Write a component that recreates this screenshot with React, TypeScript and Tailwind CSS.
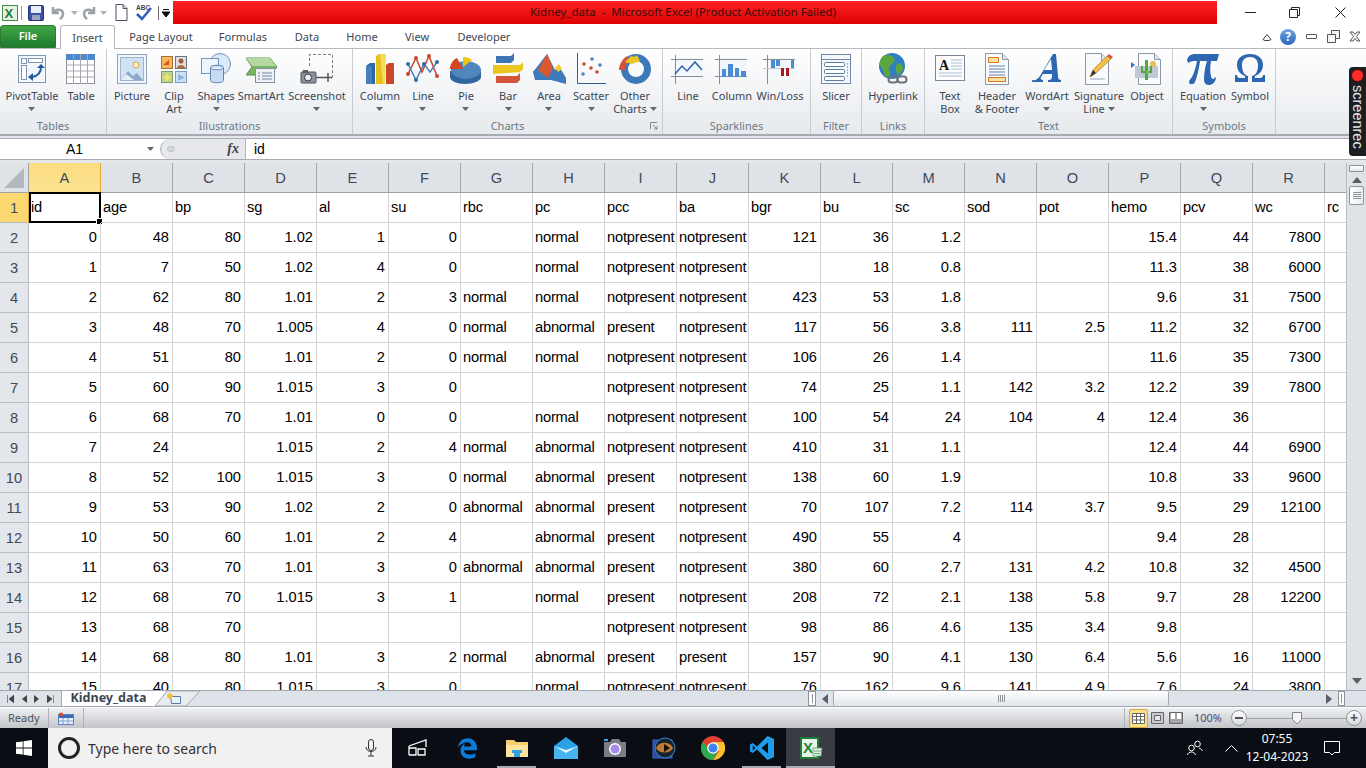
import type { ReactNode } from 'react'
import { FaEdgeLegacy } from 'react-icons/fa6'

// ─── Data ─────────────────────────────────────────────────────────────────────

const COLS = 'A B C D E F G H I J K L M N O P Q R'.split(' ')

const ROWS: string[][] = [
  ['id', 'age', 'bp', 'sg', 'al', 'su', 'rbc', 'pc', 'pcc', 'ba', 'bgr', 'bu', 'sc', 'sod', 'pot', 'hemo', 'pcv', 'wc', 'rc'],
  ['0', '48', '80', '1.02', '1', '0', '', 'normal', 'notpresent', 'notpresent', '121', '36', '1.2', '', '', '15.4', '44', '7800', ''],
  ['1', '7', '50', '1.02', '4', '0', '', 'normal', 'notpresent', 'notpresent', '', '18', '0.8', '', '', '11.3', '38', '6000', ''],
  ['2', '62', '80', '1.01', '2', '3', 'normal', 'normal', 'notpresent', 'notpresent', '423', '53', '1.8', '', '', '9.6', '31', '7500', ''],
  ['3', '48', '70', '1.005', '4', '0', 'normal', 'abnormal', 'present', 'notpresent', '117', '56', '3.8', '111', '2.5', '11.2', '32', '6700', ''],
  ['4', '51', '80', '1.01', '2', '0', 'normal', 'normal', 'notpresent', 'notpresent', '106', '26', '1.4', '', '', '11.6', '35', '7300', ''],
  ['5', '60', '90', '1.015', '3', '0', '', '', 'notpresent', 'notpresent', '74', '25', '1.1', '142', '3.2', '12.2', '39', '7800', ''],
  ['6', '68', '70', '1.01', '0', '0', '', 'normal', 'notpresent', 'notpresent', '100', '54', '24', '104', '4', '12.4', '36', '', ''],
  ['7', '24', '', '1.015', '2', '4', 'normal', 'abnormal', 'notpresent', 'notpresent', '410', '31', '1.1', '', '', '12.4', '44', '6900', ''],
  ['8', '52', '100', '1.015', '3', '0', 'normal', 'abnormal', 'present', 'notpresent', '138', '60', '1.9', '', '', '10.8', '33', '9600', ''],
  ['9', '53', '90', '1.02', '2', '0', 'abnormal', 'abnormal', 'present', 'notpresent', '70', '107', '7.2', '114', '3.7', '9.5', '29', '12100', ''],
  ['10', '50', '60', '1.01', '2', '4', '', 'abnormal', 'present', 'notpresent', '490', '55', '4', '', '', '9.4', '28', '', ''],
  ['11', '63', '70', '1.01', '3', '0', 'abnormal', 'abnormal', 'present', 'notpresent', '380', '60', '2.7', '131', '4.2', '10.8', '32', '4500', ''],
  ['12', '68', '70', '1.015', '3', '1', '', 'normal', 'present', 'notpresent', '208', '72', '2.1', '138', '5.8', '9.7', '28', '12200', ''],
  ['13', '68', '70', '', '', '', '', '', 'notpresent', 'notpresent', '98', '86', '4.6', '135', '3.4', '9.8', '', '', ''],
  ['14', '68', '80', '1.01', '3', '2', 'normal', 'abnormal', 'present', 'present', '157', '90', '4.1', '130', '6.4', '5.6', '16', '11000', ''],
  ['15', '40', '80', '1.015', '3', '0', '', 'normal', 'notpresent', 'notpresent', '76', '162', '9.6', '141', '4.9', '7.6', '24', '3800', ''],
]

// ─── Ribbon icons (36x34 box) ─────────────────────────────────────────────────

const ICONS: Record<string, ReactNode> = {
  pivot: (
    <>
      <rect x="4.5" y="3.5" width="27" height="27" fill="#f4f7fb" stroke="#7f95b2" />
      <rect x="7.5" y="6.5" width="5" height="5" fill="#fff" stroke="#7f95b2" />
      <rect x="14.5" y="6.5" width="14" height="4" fill="#fff" stroke="#7f95b2" />
      <rect x="7.5" y="13.5" width="5" height="14" fill="#fff" stroke="#7f95b2" />
      <path d="M27 15c0 6-3 9-9 10" fill="none" stroke="#1f5c9e" strokeWidth="2" />
      <path d="M23 16l4-4 4 4zM19 21v8l-5-4z" fill="#1f5c9e" />
    </>
  ),
  table: (
    <>
      <rect x="3.5" y="2.5" width="28" height="29" fill="#fff" stroke="#8d9299" />
      <rect x="3.5" y="2.5" width="28" height="5" fill="#4f87cf" stroke="#4f87cf" />
      <path d="M3 13h29M3 19h29M3 25h29M10.500 2v30M17.500 2v30M24.500 2v30" stroke="#a4a8ae" />
    </>
  ),
  picture: (
    <>
      <rect x="3.500" y="2.500" width="29" height="29" fill="#f2f6fb" stroke="#8fa6c2" />
      <rect x="6.500" y="5.500" width="23" height="23" fill="#cfe2f6" stroke="#9fb5cf" />
      <circle cx="22" cy="13" r="3" fill="#fff2c4" stroke="#ed9c4a" />
      <path d="M7 28l7-9 5 5 4-3 6 7z" fill="#8fa9cd" />
      <path d="M7 28l5-6 4 3 4 3z" fill="#e6eef8" />
    </>
  ),
  clip: (
    <>
      <rect x="5.500" y="4.500" width="11" height="12" fill="#f6b65a" stroke="#a56f36" />
      <path d="M7 13l6-5v5z" fill="#d9541e" />
      <rect x="19.500" y="4.500" width="11" height="12" fill="#dde1e6" stroke="#6c7480" />
      <circle cx="25" cy="9" r="2.500" fill="#a85c34" />
      <path d="M21 16c0-4 8-4 8 0z" fill="#b76a3a" />
      <rect x="5.500" y="19.500" width="11" height="11" fill="#bcd48c" stroke="#7f9f6a" />
      <path d="M11 21l1.500 3 3 1.500-3 1.500-1.500 3-1.500-3-3-1.500 3-1.500z" fill="#f5e36a" />
      <rect x="19.500" y="19.500" width="11" height="11" fill="#cfe0f3" stroke="#7e9cc0" />
      <path d="M22 22l7 3.500-7 3.500z" fill="#8fb3de" />
    </>
  ),
  shapes: (
    <>
      <circle cx="22" cy="12" r="10.500" fill="#dce9f7" stroke="#6e93bd" />
      <rect x="3.500" y="6.500" width="17" height="15" fill="#edf4fb" stroke="#6e93bd" />
      <path d="M12.500 15.500c0-3 13-3 13 0v13c0 3-13 3-13 0z" fill="#c7dcf2" stroke="#5e86b2" />
      <path d="M12.500 15.500c0 3 13 3 13 0" fill="#f2f7fc" stroke="#5e86b2" />
    </>
  ),
  smartart: (
    <>
      <path d="M3 6h24l7 9-7 8H3l6-8z" fill="#7bb661" stroke="#5d8c48" />
      <path d="M3 6h24l6 8H9z" fill="#b5d8a0" />
      <rect x="12.500" y="16.500" width="19" height="14" fill="#eef1f5" stroke="#8592a2" />
      <path d="M15 21h2M19 21h10M15 24h2M19 24h10M15 27h2M19 27h10" stroke="#6f86a6" />
    </>
  ),
  screenshot: (
    <>
      <path d="M10.500 14V2.500h23v23h-2" fill="none" stroke="#7d7d7d" strokeDasharray="3 2" />
      <rect x="2" y="20" width="15" height="11" rx="1" fill="#8b9198" stroke="#52575d" />
      <rect x="4" y="18" width="5" height="3" fill="#565b62" />
      <circle cx="9" cy="25.500" r="3.500" fill="#e6edf4" stroke="#33383e" />
      <path d="M17 25.500h12M29 21v9M25 25.500h8" stroke="#555" strokeWidth="1.500" />
    </>
  ),
  column: (
    <>
      <path d="M4 14l4-3h5v21H4z" fill="#2f66a8" />
      <path d="M14 4l3-2h6v30h-9z" fill="#e8c01e" />
      <path d="M18 2h6l-1 30h-2z" fill="#f5dc5d" />
      <path d="M24 13l3-2h5v21h-8z" fill="#c9482c" />
      <path d="M4 14h6v18H4z" fill="#467fbe" />
    </>
  ),
  line: (
    <>
      <path d="M3 22L11 6l6 14 7-16 8 20" fill="none" stroke="#c9472e" strokeWidth="1.500" />
      <path d="M3 12l8 16 8-16 6 8 7-10" fill="none" stroke="#4d7fb3" strokeWidth="1.500" />
      <g fill="#2f6ba8">
        <circle cx="3" cy="12" r="2" /><circle cx="11" cy="28" r="2" /><circle cx="19" cy="12" r="2" /><circle cx="32" cy="10" r="2" />
      </g>
      <g fill="#c9472e">
        <circle cx="3" cy="22" r="2" /><circle cx="11" cy="6" r="2" /><circle cx="24" cy="4" r="2" /><circle cx="32" cy="24" r="2" />
      </g>
    </>
  ),
  pie: (
    <>
      <path d="M2 19v6c0 4 7 7 15 7s16-3 16-7v-6z" fill="#2f66a0" />
      <ellipse cx="18" cy="18" rx="15" ry="9" fill="#4f87bd" />
      <path d="M15 17L9 6C5 8 2 12 2 17z" fill="#d9431f" />
      <path d="M15 15V5c4 0 7 1 9 3z" fill="#f1c40f" />
    </>
  ),
  bar: (
    <>
      <path d="M6 4h15l3-3v7l-3 3H6z" fill="#3d76b7" />
      <path d="M6 13h24l3-3v7l-3 3-27 2v-9z" fill="#ecc51f" />
      <path d="M6 24h21l3-3v7l-3 3H6z" fill="#d4563a" />
    </>
  ),
  area: (
    <>
      <path d="M2 20L8 14l6 14z" fill="#3f7bbb" />
      <path d="M2 20L16 2l8 16 4-4 7 12v6L20 28 4 28z" fill="#3f7bbb" />
      <path d="M7 18L16 2l6 14-5 10z" fill="#d9572e" />
      <path d="M24 16l4-4 3 5-4 3z" fill="#f2cc2c" />
    </>
  ),
  scatter: (
    <>
      <path d="M4.500 1v30.500H33" fill="none" stroke="#2c5d94" />
      <g fill="#d24a2d">
        <circle cx="11" cy="12" r="1.800" /><circle cx="18" cy="16" r="1.800" /><circle cx="24" cy="20" r="1.800" />
      </g>
      <g fill="#4d84bd">
        <circle cx="19" cy="7" r="1.800" /><circle cx="27" cy="13" r="1.800" /><circle cx="10" cy="22" r="1.800" />
      </g>
    </>
  ),
  other: (
    <>
      <circle cx="19" cy="17" r="11.500" fill="none" stroke="#3d78b8" strokeWidth="7" />
      <path d="M8 15c0-4 2-7 5-9l-3-5c-5 3-8 9-8 14z" fill="#d4563a" transform="translate(0 3)" />
      <path d="M9 9l6-6c1 1 5 1 6-1l3 6-8 3z" fill="#ecc51f" transform="translate(-1 1)" />
    </>
  ),
  sline: (
    <>
      <rect x="4" y="6" width="29" height="20" fill="#f3f6fa" />
      <path d="M1 7.500h32M1 24.500h32M5.500 3v29" stroke="#8a8f96" />
      <path d="M5 22l7-8 5 5 8-9 7 8" fill="none" stroke="#2c64b0" strokeWidth="1.500" />
    </>
  ),
  scolumn: (
    <>
      <rect x="4" y="6" width="29" height="20" fill="#f3f6fa" />
      <path d="M1 7.500h32M1 24.500h32M5.500 3v29" stroke="#8a8f96" />
      <path d="M8 17h4v8H8zM14 12h5v13h-5zM21 16h4v9h-4zM27 19h5v6h-5z" fill="#4a8cd4" />
    </>
  ),
  swin: (
    <>
      <rect x="4" y="6" width="29" height="20" fill="#f3f6fa" />
      <path d="M1 7.500h32M5.500 3v29" stroke="#8a8f96" />
      <path d="M1 16.500h32" stroke="#c6cad0" />
      <path d="M9 8h4v8H9zM14 8h4v6h-4zM29 8h3v8h-3z" fill="#4a8cd4" />
      <path d="M19 16h3v8h-3zM24 16h3v8h-3z" fill="#a31c1c" />
    </>
  ),
  slicer: (
    <>
      <rect x="3.500" y="2.500" width="29" height="29" fill="#f4f7fb" stroke="#6f8aa8" />
      <path d="M3 7.500h30" stroke="#6f8aa8" />
      <rect x="6.500" y="10.500" width="20" height="4" rx="1" fill="#fff" stroke="#5c7da3" />
      <rect x="6.500" y="17.500" width="20" height="4" rx="1" fill="#fff" stroke="#5c7da3" />
      <rect x="6.500" y="24.500" width="20" height="4" rx="1" fill="#fff" stroke="#5c7da3" />
      <path d="M29.500 11v15" stroke="#9cb0c5" strokeDasharray="2 1" />
    </>
  ),
  hyperlink: (
    <>
      <circle cx="17" cy="14" r="13" fill="#2f7fc4" />
      <path d="M8 4c4-2 9-1 11 2 2 2-1 6-3 7-3 1-2 5-1 8 1 2-2 5-5 3-2-3-1-6-4-9-2-3-1-8 2-11zM22 12c3-2 5 0 6 3 0 4-2 7-5 8-2-3-3-8-1-11z" fill="#5da63c" />
      <rect x="13.500" y="24.500" width="9" height="6" rx="3" fill="none" stroke="#6b737c" strokeWidth="2" />
      <rect x="22.500" y="24.500" width="9" height="6" rx="3" fill="none" stroke="#6b737c" strokeWidth="2" />
    </>
  ),
  textbox: (
    <>
      <rect x="3.500" y="3.500" width="29" height="25" fill="#fdfdfe" stroke="#7b8794" />
      <text x="7" y="18" fontFamily="Liberation Serif, serif" fontWeight="700" fontSize="14" fill="#111">A</text>
      <path d="M19 8h11M19 11h11M19 14h11M19 17h11M7 21h23M7 24h23" stroke="#a9bcd4" />
    </>
  ),
  header: (
    <>
      <path d="M6.500 1.500h17l6 6v25h-23z" fill="#f8fafc" stroke="#8a97a6" />
      <path d="M23.500 1.500v6h6" fill="#dde4ec" stroke="#8a97a6" />
      <rect x="9.500" y="5.500" width="10" height="5" fill="#fbe3a8" stroke="#d97a1e" />
      <path d="M10 14h16M10 17h16M10 20h16M10 23h16" stroke="#5f7fb0" />
      <rect x="9.500" y="25.500" width="17" height="4" fill="#fbe3a8" stroke="#d97a1e" />
    </>
  ),
  wordart: (
    <path d="M3 28c3 1 6-1 8-4L24 2h3l2 22c0 3 1 4 3 4v2H19v-2c3 0 4-1 4-4v-2h-9l-2 3c-1 2 0 3 2 3v2H3zM15 18h8l-1-11z" fill="#2e67b1" fillRule="evenodd" />
  ),
  signature: (
    <>
      <path d="M4.500 1.500h16l7 7v24h-23z" fill="#f9fafc" stroke="#8a97a6" />
      <path d="M20.500 1.500v7h7" fill="#dde4ec" stroke="#8a97a6" />
      <path d="M9 27h15" stroke="#9aa7b5" />
      <path d="M9 25l3-7L26 4l4 3-15 14z" fill="#f1c14a" stroke="#a97920" strokeWidth=".7" />
      <path d="M26 4l2-2 4 3-2 2z" fill="#d7553f" />
      <path d="M9 25l3-7 3 3z" fill="#333" />
    </>
  ),
  object: (
    <>
      <path d="M9.500 1.500h16l6 6v25h-22z" fill="#f8fafc" stroke="#8a97a6" />
      <path d="M25.500 1.500v6h6" fill="#dde4ec" stroke="#8a97a6" />
      <rect x="6" y="14" width="23" height="12" fill="#bfc9d4" />
      <circle cx="24" cy="12" r="3" fill="#e4bd5d" />
      <path d="M16 8h3v20h-3zM12 14h2v5h4v2h-6zM23 14h-2v5h-4v2h6z" fill="#52a742" />
      <path d="M2 10l4 3-4 3z" fill="#2a74c4" />
    </>
  ),
  equation: (
    <path d="M2 8c1-4 4-6 8-6h24l-2 7h-6c-1 6-1 11 0 15 0 2 1 3 3 3l1-2 1 1c-1 5-4 7-7 7-4 0-5-3-5-6 0-5 1-12 3-18h-7c-1 8-3 16-5 21-1 3-6 3-6 0 0-2 2-3 3-5 2-4 4-10 5-16H9c-3 0-4 1-6 2z" fill="#2e67b1" />
  ),
  symbol: (
    <path d="M3 30v-7h2c0 2 1 3 3 3h5v-2c-5-2-8-6-8-11C5 6 10 2 18 2s13 4 13 11c0 5-3 9-8 11v2h5c2 0 3-1 3-3h2v7H20v-6c4-1 6-5 6-11 0-5-3-8-8-8s-8 3-8 8c0 6 2 10 6 11v6z" fill="#2e67b1" />
  ),
}

// ─── Sub-components ───────────────────────────────────────────────────────────

function Caret({ className = '' }: { className?: string }) {
  return (
    <svg width="7" height="4" viewBox="0 0 7 4" className={`inline-block ${className}`}>
      <path d="M0 0h7L3.500 4z" fill="#5f6770" />
    </svg>
  )
}

function RibbonButton({
  icon,
  width,
  label,
  arrow,
}: {
  icon: string
  width: number
  label: string[]
  arrow?: boolean
}) {
  return (
    <div className="flex flex-col items-center shrink-0" style={{ width }}>
      <svg width="36" height="34" viewBox="0 0 36 34">
        {ICONS[icon]}
      </svg>
      <div className="mt-[3px] text-center whitespace-nowrap leading-[13px] text-[11px] text-[#3c4653]">
        <div>{label[0]}</div>
        {label[1] && (
          <div>
            {label[1]}
            {arrow && <Caret className="ml-[3px] mb-[2px]" />}
          </div>
        )}
        {!label[1] && arrow && (
          <div className="flex h-[13px] items-center justify-center">
            <Caret />
          </div>
        )}
      </div>
    </div>
  )
}

function RibbonGroup({
  title,
  width,
  pad,
  launcher,
  children,
}: {
  title: string
  width: number
  pad: number
  launcher?: boolean
  children: ReactNode
}) {
  return (
    <div
      className="flex flex-col shrink-0 h-full border-r border-[#c8ccd2] relative"
      style={{ width, paddingLeft: pad }}
    >
      <div className="flex flex-1 pt-[3px]">{children}</div>
      <div className="h-[16px] text-center leading-[16px] text-[11px] text-[#6d7885]" style={{ marginLeft: -pad }}>
        {title}
      </div>
      {launcher && (
        <svg width="8" height="8" viewBox="0 0 8 8" className="absolute right-[4px] bottom-[4px]">
          <path d="M.5 7V.5H7M3 3l4 4M4 7h3V4" fill="none" stroke="#7d8794" />
        </svg>
      )}
    </div>
  )
}

function Arrow({ dir, className = '' }: { dir: 'l' | 'r' | 'u' | 'd'; className?: string }) {
  const d = { l: 'M6 0v10L0 5z', r: 'M0 0v10l6-5z', u: 'M0 6h10L5 0z', d: 'M0 0h10L5 6z' }[dir]
  const w = dir === 'l' || dir === 'r' ? 6 : 10
  const h = dir === 'l' || dir === 'r' ? 10 : 6
  return (
    <svg width={w} height={h} viewBox={`0 0 ${w} ${h}`} className={className}>
      <path d={d} fill="#5b5f66" />
    </svg>
  )
}

function TitleBar() {
  return (
    <div className="flex h-[25px] shrink-0 items-center bg-white">
      <div className="flex w-[173px] shrink-0 items-center">
        <svg width="18" height="18" viewBox="0 0 18 18" className="ml-[1px]">
          <rect x="1.500" y="1.500" width="15" height="15" fill="#e8f2e4" stroke="#3f8f48" />
          <text x="3.500" y="14" fontSize="13" fontWeight="700" fontFamily="Liberation Sans, sans-serif" fill="#1d7a35">X</text>
        </svg>
        <div className="ml-[2px] mr-[6px] h-[14px] w-px bg-[#9b9b9b]" />
        <svg width="16" height="16" viewBox="0 0 16 16">
          <rect x=".5" y=".5" width="15" height="15" rx="1" fill="#3c52a8" stroke="#27346f" />
          <rect x="3" y="1" width="10" height="7" fill="#e9eefa" />
          <rect x="4" y="10" width="8" height="5" fill="#9aa4c0" />
        </svg>
        <svg width="20" height="16" viewBox="0 0 20 16" className="ml-[5px]">
          <path d="M4 2v6h6M4 8c3-5 10-4 10 1 0 3-2 4-3 5" fill="none" stroke="#9aa0a8" strokeWidth="2.500" />
        </svg>
        <Caret className="ml-[2px] opacity-50" />
        <svg width="20" height="16" viewBox="0 0 20 16">
          <path d="M16 2v6h-6M16 8c-3-5-10-4-10 1 0 3 2 4 3 5" fill="none" stroke="#9aa0a8" strokeWidth="2.500" />
        </svg>
        <Caret className="ml-[2px] opacity-50" />
        <svg width="13" height="17" viewBox="0 0 13 17" className="ml-[8px]">
          <path d="M1 .5h7l4 4v12H1z" fill="#fff" stroke="#48535f" />
          <path d="M8 .5v4h4" fill="#c9d4df" stroke="#48535f" />
        </svg>
        <svg width="18" height="17" viewBox="0 0 18 17" className="ml-[7px]">
          <text x="1" y="6" fontSize="6.500" fontWeight="700" fontFamily="Liberation Sans, sans-serif" fill="#444">ABC</text>
          <path d="M2 10l5 5 9-11" fill="none" stroke="#2c5fb3" strokeWidth="2.500" />
        </svg>
        <div className="ml-[5px] mr-[3px] h-[14px] w-px bg-[#6e6e6e]" />
        <svg width="8" height="8" viewBox="0 0 8 8">
          <path d="M1 .5h6M0 3h8L4 8z" stroke="#111" fill="#111" />
        </svg>
      </div>
      <div className="flex h-[23px] w-[1044px] shrink-0 items-center justify-center bg-gradient-to-b from-[#ff2020] to-[#dc0000] pb-[1px] pr-[24px] text-[11.5px] text-[#3a0c0c]">
        Kidney_data&nbsp;&nbsp;-&nbsp;&nbsp;Microsoft Excel (Product Activation Failed)
      </div>
      <div className="flex flex-1 items-center pl-[28px] gap-[33px]">
        <svg width="11" height="11" viewBox="0 0 11 11"><path d="M0 5.500h11" stroke="#222" /></svg>
        <svg width="11" height="11" viewBox="0 0 11 11"><path d="M.5 2.500h8v8h-8zM2.500 2.500V.5h8v8h-2" fill="none" stroke="#222" /></svg>
        <svg width="11" height="11" viewBox="0 0 11 11" className="ml-[2px]"><path d="M.5.500l10 10M10.500.5l-10 10" stroke="#222" /></svg>
      </div>
    </div>
  )
}

function TabBar() {
  const tabs = [
    ['Page Layout', 92],
    ['Formulas', 72],
    ['Data', 56],
    ['Home', 54],
    ['View', 56],
    ['Developer', 78],
  ] as const
  return (
    <div className="flex h-[24px] shrink-0 items-end border-b border-[#b6babf] bg-white text-[11px]">
      <div className="flex h-[23px] w-[56px] items-center justify-center rounded-t-[3px] border border-[#2c7a32] bg-gradient-to-b from-[#41a647] to-[#1c7b2e] font-semibold text-white">
        File
      </div>
      <div className="ml-[4px] flex h-[24px] w-[55px] translate-y-[1px] items-center justify-center rounded-t-[3px] border border-b-0 border-[#b6babf] bg-white pt-[1px] text-[#3c4653]">
        Insert
      </div>
      {tabs.map(([name, w]) => (
        <div key={name} className="flex h-[23px] items-center justify-center pt-[1px] text-[#3c4653]" style={{ width: w }}>
          {name}
        </div>
      ))}
      <div className="flex h-[23px] flex-1 items-center justify-end gap-[7px] pr-[5px]">
        <svg width="10" height="8" viewBox="0 0 10 8"><path d="M1 6.500L5 1.500l4 5-2 1H3z" fill="#fff" stroke="#444" /></svg>
        <div className="ml-[1px] flex h-[16px] w-[16px] items-center justify-center rounded-full bg-gradient-to-b from-[#6ea5e6] to-[#2b66b8] text-[12px] font-bold leading-none text-white">
          ?
        </div>
        <div className="ml-[3px] h-[5px] w-[11px] rounded-[1px] border border-[#555]" />
        <svg width="13" height="13" viewBox="0 0 13 13" className="ml-[3px]"><path d="M.5 4.500h8v8h-8zM4.500 4.500v-4h8v8h-4" fill="#f3f3f3" stroke="#555" /><path d="M3 8h4v3H3z" fill="#fff" /></svg>
        <svg width="12" height="11" viewBox="0 0 12 11" className="ml-[2px]"><path d="M1 1h3l2 2.500L8 1h3L7.500 5.500 11 10H8L6 7.500 4 10H1l3.500-4.500z" fill="#fff" stroke="#555" /></svg>
      </div>
    </div>
  )
}

function Ribbon() {
  return (
    <div className="relative flex h-[87px] shrink-0 border-b-2 border-[#a7aaae] bg-gradient-to-b from-white to-[#e6e9ed]">
      <RibbonGroup title="Tables" width={107} pad={3}>
        <RibbonButton icon="pivot" width={58} label={['PivotTable']} arrow />
        <RibbonButton icon="table" width={40} label={['Table']} />
      </RibbonGroup>
      <RibbonGroup title="Illustrations" width={246} pad={3}>
        <RibbonButton icon="picture" width={44} label={['Picture']} />
        <RibbonButton icon="clip" width={40} label={['Clip', 'Art']} />
        <RibbonButton icon="shapes" width={44} label={['Shapes']} arrow />
        <RibbonButton icon="smartart" width={46} label={['SmartArt']} />
        <RibbonButton icon="screenshot" width={66} label={['Screenshot']} arrow />
      </RibbonGroup>
      <RibbonGroup title="Charts" width={310} pad={4} launcher>
        <RibbonButton icon="column" width={46} label={['Column']} arrow />
        <RibbonButton icon="line" width={40} label={['Line']} arrow />
        <RibbonButton icon="pie" width={46} label={['Pie']} arrow />
        <RibbonButton icon="bar" width={38} label={['Bar']} arrow />
        <RibbonButton icon="area" width={44} label={['Area']} arrow />
        <RibbonButton icon="scatter" width={40} label={['Scatter']} arrow />
        <RibbonButton icon="other" width={48} label={['Other', 'Charts']} arrow />
      </RibbonGroup>
      <RibbonGroup title="Sparklines" width={148} pad={3}>
        <RibbonButton icon="sline" width={44} label={['Line']} />
        <RibbonButton icon="scolumn" width={44} label={['Column']} />
        <RibbonButton icon="swin" width={52} label={['Win/Loss']} />
      </RibbonGroup>
      <RibbonGroup title="Filter" width={51} pad={3}>
        <RibbonButton icon="slicer" width={44} label={['Slicer']} />
      </RibbonGroup>
      <RibbonGroup title="Links" width={63} pad={2}>
        <RibbonButton icon="hyperlink" width={58} label={['Hyperlink']} />
      </RibbonGroup>
      <RibbonGroup title="Text" width={248} pad={3}>
        <RibbonButton icon="textbox" width={44} label={['Text', 'Box']} />
        <RibbonButton icon="header" width={50} label={['Header', '& Footer']} />
        <RibbonButton icon="wordart" width={50} label={['WordArt']} arrow />
        <RibbonButton icon="signature" width={54} label={['Signature', 'Line']} arrow />
        <RibbonButton icon="object" width={42} label={['Object']} />
      </RibbonGroup>
      <RibbonGroup title="Symbols" width={103} pad={4}>
        <RibbonButton icon="equation" width={52} label={['Equation']} arrow />
        <RibbonButton icon="symbol" width={42} label={['Symbol']} />
      </RibbonGroup>
    </div>
  )
}

function FormulaBar() {
  return (
    <div className="flex h-[27px] shrink-0 flex-col bg-[#e3e6ea] pt-[2px]">
      <div className="flex h-[22px] items-center border-y border-[#a9adb3] bg-white font-['Liberation_Sans',sans-serif] text-[14px]">
        <div className="flex w-[160px] items-center pr-[6px]">
          <div className="flex-1 pl-[2px] text-center">A1</div>
          <Caret />
        </div>
        <div className="flex h-full w-[85px] items-center justify-between rounded-l-full border-l border-[#a9adb3] bg-[#e6e8ec] pl-[6px] pr-[6px]">
          <div className="h-[6px] w-[8px] rounded-full border border-[#c2c5ca] bg-[#d3d6da]" />
          <span className="font-['Liberation_Serif',serif] text-[14px] font-bold italic leading-none text-[#444]">fx</span>
        </div>
        <div className="border-l border-[#b4b8bd] pl-[8px] h-full leading-[20px]">id</div>
      </div>
    </div>
  )
}

function Sheet() {
  return (
    <div className="min-w-0 flex-1 overflow-hidden bg-white font-['Liberation_Sans',sans-serif] text-[14.67px] text-black">
      <div className="flex h-[30px] border-b border-[#9fa3a9] bg-[#dfe2e7] text-[#3e4a59]">
        <div className="flex w-[29px] shrink-0 items-end justify-end border-r border-[#9fa3a9] pb-[4px] pr-[4px]">
          <svg width="20" height="20" viewBox="0 0 20 20"><path d="M20 0v20H0z" fill="#b4b8bd" /></svg>
        </div>
        {COLS.map((c, i) => (
          <div
            key={c}
            className={`flex w-[72px] shrink-0 items-center justify-center border-r border-[#a5a9af] ${
              i === 0 ? 'border-[#e2a83c] bg-gradient-to-b from-[#fbdc80] to-[#fbe38f]' : ''
            }`}
          >
            {c}
          </div>
        ))}
      </div>
      {ROWS.map((row, r) => (
        <div key={r} className="flex h-[30px] shrink-0">
          <div
            className={`flex w-[29px] shrink-0 items-center justify-center border-b border-r border-[#b9bdc3] text-[#3e4a59] ${
              r === 0 ? 'border-r-[#e2a83c] bg-[#fbd872]' : 'bg-[#e3e6ea]'
            }`}
          >
            {r + 1}
          </div>
          {row.map((cell, c) => {
            const numeric = r > 0 && /^[\d.]+$/.test(cell)
            return (
              <div
                key={c}
                className={`relative flex h-[30px] w-[72px] shrink-0 items-center whitespace-nowrap border-b border-r border-[#d4d4d4] pb-[1px] ${
                  numeric ? 'justify-end pr-[3px]' : 'pl-[2px] tracking-[-0.2px]'
                }`}
              >
                {cell}
                {r === 0 && c === 0 && (
                  <div className="absolute -top-px left-0 h-[31px] w-[72px] border-2 border-black">
                    <div className="absolute -bottom-[4px] -right-[4px] h-[7px] w-[7px] border border-white bg-black" />
                  </div>
                )}
              </div>
            )
          })}
        </div>
      ))}
    </div>
  )
}

function VScroll() {
  return (
    <div className="flex w-[20px] shrink-0 flex-col items-center border-l border-[#b8bcc2] bg-[#dfe3e8] pt-[2px]">
      <div className="h-[7px] w-[15px] rounded-[1px] border border-[#8e939a] bg-gradient-to-b from-white to-[#e4e6e9]" />
      <Arrow dir="u" className="mt-[5px]" />
      <div className="mt-[3px] flex h-[19px] w-[15px] flex-col items-center justify-center gap-px rounded-[2px] border border-[#8e939a] bg-gradient-to-r from-white to-[#e8eaed]">
        <div className="h-px w-[8px] bg-[#8e939a]" />
        <div className="h-px w-[8px] bg-[#8e939a]" />
        <div className="h-px w-[8px] bg-[#8e939a]" />
        <div className="h-px w-[8px] bg-[#8e939a]" />
      </div>
      <div className="flex-1" />
      <Arrow dir="d" className="mb-[6px]" />
    </div>
  )
}

function SheetTabs() {
  return (
    <div className="flex h-[17px] shrink-0 items-stretch border-y border-[#a4a8ae] bg-[#dee2e9]">
      <div className="flex w-[62px] items-center justify-around border-r border-[#a4a8ae] px-[3px]">
        <svg width="7" height="8" viewBox="0 0 7 8"><path d="M.5 0v8M7 0v8L2 4z" stroke="#444" fill="#444" strokeWidth=".6" /></svg>
        <svg width="5" height="8" viewBox="0 0 5 8"><path d="M5 0v8L0 4z" fill="#444" /></svg>
        <svg width="5" height="8" viewBox="0 0 5 8"><path d="M0 0v8l5-4z" fill="#444" /></svg>
        <svg width="7" height="8" viewBox="0 0 7 8"><path d="M6.500 0v8M0 0v8l5-4z" stroke="#444" fill="#444" strokeWidth=".6" /></svg>
      </div>
      <div className="flex w-[93px] items-center justify-center bg-white pb-[1px] font-['Noto_Sans',sans-serif] text-[12.5px] font-bold text-[#3c4653]">
        Kidney_data
      </div>
      <svg width="46" height="15" viewBox="0 0 46 15" className="shrink-0">
        <path d="M0 0h12L0 15z" fill="#fff" />
        <path d="M0 15L12 0h33L31 15z" fill="#e8ebf0" stroke="#a4a8ae" />
        <path d="M15.500 5.500h10v7h-9z" fill="#e9f0f8" stroke="#567ca6" />
        <circle cx="15" cy="5" r="2.800" fill="#f3c23c" />
      </svg>
      <div className="w-[607px] shrink-0" />
      <div className="mr-[6px] flex w-[8px] items-center justify-center border border-[#8e939a] bg-white">
        <div className="h-[9px] w-px bg-[#8e939a]" />
      </div>
      <Arrow dir="l" className="my-auto mr-[5px]" />
      <div className="flex w-[336px] items-center justify-center gap-px rounded-[2px] border-x border-[#a4a8ae] bg-gradient-to-b from-white to-[#e2e5ea]">
        <div className="h-[7px] w-px bg-[#8e939a]" />
        <div className="h-[7px] w-px bg-[#8e939a]" />
        <div className="h-[7px] w-px bg-[#8e939a]" />
        <div className="h-[7px] w-px bg-[#8e939a]" />
      </div>
      <div className="flex-1" />
      <Arrow dir="r" className="my-auto mr-[6px]" />
      <div className="mr-[21px] flex w-[7px] items-center justify-center border border-[#8e939a] bg-white">
        <div className="h-[9px] w-px bg-[#8e939a]" />
      </div>
    </div>
  )
}

function StatusBar() {
  return (
    <div className="flex h-[21px] shrink-0 items-center border-t border-white bg-gradient-to-b from-[#eef0f2] to-[#c3c5c9] pr-[4px] text-[11px] text-[#4a5462]">
      <div className="flex h-full w-[49px] items-center border-r border-[#aeb1b5] pl-[8px]">Ready</div>
      <div className="flex h-full w-[35px] items-center justify-center border-r border-[#aeb1b5]">
        <svg width="16" height="13" viewBox="0 0 16 13">
          <rect x=".5" y="2.500" width="15" height="10" fill="#eaf1fb" stroke="#5a82c0" />
          <rect x="1" y="3" width="14" height="3" fill="#3b6cb5" />
          <path d="M1 9h14M5 6v6M10 6v6" stroke="#7f9fd0" />
          <circle cx="3" cy="2.500" r="2" fill="#d9432a" />
        </svg>
      </div>
      <div className="flex-1" />
      <div className="flex h-full items-center border-l border-[#aeb1b5] pl-[4px]">
        <div className="flex h-[19px] w-[19px] items-center justify-center rounded-[2px] border border-[#d9a63b] bg-[#fbe08b]">
          <svg width="13" height="11" viewBox="0 0 13 11"><path d="M.5.500h12v10H.5zM.5 3.500h12M.5 7h12M4.500 .5v10M8.500 .5v10" fill="#fff" stroke="#666" /></svg>
        </div>
        <svg width="13" height="12" viewBox="0 0 13 12" className="ml-[3px]"><path d="M.5.500h12v11H.5z" fill="#c8cace" stroke="#666" /><path d="M3.500 3.500h6v5h-6z" fill="#e9e9e9" stroke="#666" /></svg>
        <svg width="14" height="12" viewBox="0 0 14 12" className="ml-[5px]"><path d="M.5.500h13v11H.5z" fill="#a4a6aa" stroke="#666" /><path d="M2 1h4v6H2zM8 1h4v6H8z" fill="#fff" /></svg>
      </div>
      <div className="ml-[10px] w-[30px] text-center text-[#4a4a78]">100%</div>
      <div className="ml-[8px] flex h-[16px] w-[16px] items-center justify-center rounded-full border border-[#8e939a] bg-gradient-to-b from-white to-[#d8dade]">
        <div className="h-[2px] w-[8px] bg-[#555]" />
      </div>
      <div className="flex w-[99px] items-center">
        <div className="h-px w-[45px] bg-[#a0a3a8]" />
        <svg width="10" height="13" viewBox="0 0 10 13"><path d="M.5.500h9v7L5 12 .5 7.500z" fill="#f4f4f5" stroke="#80858c" /></svg>
        <div className="h-px flex-1 bg-[#a0a3a8]" />
      </div>
      <div className="flex h-[16px] w-[16px] items-center justify-center rounded-full border border-[#8e939a] bg-gradient-to-b from-white to-[#d8dade] text-[14px] font-bold leading-none text-[#555]">
        +
      </div>
    </div>
  )
}

function TaskSlot({ active, line, children }: { active?: boolean; line?: boolean; children: ReactNode }) {
  return (
    <div className={`relative flex h-full w-[49px] shrink-0 items-center justify-center ${active ? 'bg-[#393c42]' : ''}`}>
      {children}
      {line && <div className={`absolute bottom-0 h-[2px] bg-[#a9abae] ${active ? 'left-0 right-0' : 'left-[5px] right-[5px]'}`} />}
    </div>
  )
}

function Taskbar() {
  return (
    <div className="flex h-[40px] shrink-0 items-center bg-[#0a0e14] font-['Noto_Sans',sans-serif] text-white">
      <div className="flex h-full w-[48px] items-center justify-center">
        <svg width="16" height="16" viewBox="0 0 16 16">
          <path d="M0 2.300l6.700-.9v6.200H0zM7.500 1.300L16 0v7.600H7.500zM0 8.400h6.700v6.200L0 13.700zM7.500 8.400H16V16l-8.500-1.200z" fill="#fff" />
        </svg>
      </div>
      <div className="flex h-full w-[344px] items-center bg-[#f1f1f1] pl-[10px] text-[14px] text-[#333]">
        <div className="h-[22px] w-[22px] rounded-full border-[3px] border-[#222]" />
        <span className="ml-[8px]">Type here to search</span>
        <svg width="14" height="18" viewBox="0 0 14 18" className="ml-auto mr-[14px]">
          <rect x="4.500" y=".5" width="5" height="11" rx="2.500" fill="none" stroke="#333" />
          <path d="M2 8c0 6 10 6 10 0M7 13v4M4 17h6" fill="none" stroke="#333" />
        </svg>
      </div>
      <div className="flex h-full w-[51px] items-center justify-center">
        <svg width="20" height="18" viewBox="0 0 20 18">
          <path d="M1 7l17-6v7M1 7v9M1 16h7V9H1M10 16h7V10h-7v6" fill="none" stroke="#fff" strokeWidth="1.300" />
        </svg>
      </div>
      <TaskSlot><FaEdgeLegacy size={21} color="#0c7bd8" /></TaskSlot>
      <TaskSlot line>
        <svg width="22" height="20" viewBox="0 0 22 20">
          <path d="M0 2h8l2 2h12v15H0z" fill="#f6cf6c" />
          <path d="M0 7h22v12H0z" fill="#fbe3a0" />
          <path d="M6 12h10v3h-2v4H8v-4H6z" fill="#2fa3e0" />
        </svg>
      </TaskSlot>
      <TaskSlot>
        <svg width="24" height="22" viewBox="0 0 24 22">
          <path d="M0 9L12 0l12 9v13H0z" fill="#2aa0e6" />
          <path d="M0 9l12 8 12-8-12 4z" fill="#e5f4fd" />
          <path d="M0 9l12 7 12-7v13H0z" fill="#47b5f2" />
        </svg>
      </TaskSlot>
      <TaskSlot>
        <svg width="24" height="20" viewBox="0 0 24 20">
          <path d="M1 4h6l2-3h7l2 3h5v15H1z" fill="#7a7f86" />
          <circle cx="12" cy="11" r="6" fill="#fff" />
          <circle cx="12" cy="11" r="4.500" fill="#a88be8" />
          <rect x="1" y="1" width="4" height="2" fill="#3aa0e6" />
        </svg>
      </TaskSlot>
      <TaskSlot>
        <svg width="24" height="24" viewBox="0 0 24 24">
          <rect x="1" y="4" width="19" height="18" fill="#2a4aa8" stroke="#3b66d0" />
          <circle cx="13" cy="12" r="10" fill="#16242f" stroke="#3f86c7" />
          <path d="M4 12c3-7 14-7 17 0-3 6-14 6-17 0z" fill="#c4792e" />
          <path d="M12 8l6 4-6 4z" fill="#0f0f12" />
        </svg>
      </TaskSlot>
      <TaskSlot>
        <svg width="24" height="24" viewBox="0 0 24 24">
          <circle cx="12" cy="12" r="12" fill="#e2402f" />
          <path d="M12 12L1.600 18A12 12 0 0 1 1.800 5.700L7 12z" fill="#2da94f" />
          <path d="M1.600 18L7.500 8l4.500 4 5.500 1-5 11A12 12 0 0 1 1.600 18z" fill="#2da94f" />
          <path d="M12 6h10.500A12 12 0 0 1 12.500 24L18 15z" fill="#fbc02d" />
          <circle cx="12" cy="12" r="5.800" fill="#fff" />
          <circle cx="12" cy="12" r="4.500" fill="#3f84ee" />
        </svg>
      </TaskSlot>
      <TaskSlot line>
        <svg width="24" height="24" viewBox="0 0 24 24">
          <path d="M17.500 0L24 3v18l-6.500 3L7 13.500 2.800 17 0 15.500v-7L2.800 7 7 10.500z" fill="#1f9ce8" />
          <path d="M18 6.500l-6.500 5.500 6.500 5.500zM2.800 9.500v5L5.500 12z" fill="#0a0e14" />
        </svg>
      </TaskSlot>
      <TaskSlot active line>
        <svg width="24" height="24" viewBox="0 0 24 24">
          <rect x="1" y="1" width="19" height="22" fill="#1f7a3c" />
          <rect x="3" y="3" width="15" height="18" fill="#e8f3e8" />
          <text x="4" y="17" fontSize="15" fontWeight="700" fontFamily="Liberation Sans, sans-serif" fill="#1c8a3e">X</text>
          <path d="M14 12h9l-1 8h-8zM15 15h7M15 17.500h6" fill="#dfeee0" stroke="#57a066" strokeWidth=".8" />
        </svg>
      </TaskSlot>
      <div className="flex-1" />
      <svg width="16" height="16" viewBox="0 0 16 16" className="mr-[22px]">
        <circle cx="10.500" cy="4" r="2.800" fill="none" stroke="#fff" />
        <circle cx="4.500" cy="8" r="2.800" fill="none" stroke="#fff" />
        <path d="M.5 15c.5-4 7-4 8 0M12 8c2 .5 3 2 3.500 3" fill="none" stroke="#fff" />
      </svg>
      <svg width="13" height="8" viewBox="0 0 13 8" className="mr-[1px]"><path d="M.5 7.500l6-6 6 6" fill="none" stroke="#fff" /></svg>
      <div className="w-[76px] text-center text-[12px] leading-[18px]">
        <div>07:55</div>
        <div>12-04-2023</div>
      </div>
      <svg width="16" height="15" viewBox="0 0 16 15" className="ml-[9px] mr-[26px]">
        <path d="M.5.500h15v11h-5l-2.500 2.500-2.500-2.500h-5z" fill="none" stroke="#fff" />
      </svg>
    </div>
  )
}

// ─── Main component ───────────────────────────────────────────────────────────

export default function App() {
  return (
    <div className="relative flex h-[768px] w-[1366px] flex-col overflow-hidden bg-white font-['Noto_Sans',sans-serif]">
      <TitleBar />
      <TabBar />
      <Ribbon />
      <FormulaBar />

      <div className="flex min-h-0 flex-1">
        <Sheet />
        <VScroll />
      </div>

      <SheetTabs />
      <StatusBar />
      <Taskbar />

      {/* screenrec badge floats over the ribbon */}
      <div className="absolute left-[1349px] top-[67px] flex h-[89px] w-[17px] flex-col items-center rounded-l-[4px] bg-[#1c1f22] pt-[3px]">
        <div className="h-[11px] w-[11px] rounded-full border-2 border-[#ff2a2a] bg-[#ff2a2a] ring-1 ring-[#5a1111]" />
        <span className="mt-[4px] font-['Liberation_Sans',sans-serif] text-[14.5px] leading-[16px] text-[#e8e8e8] [writing-mode:vertical-rl]">
          screenrec
        </span>
      </div>
    </div>
  )
}
